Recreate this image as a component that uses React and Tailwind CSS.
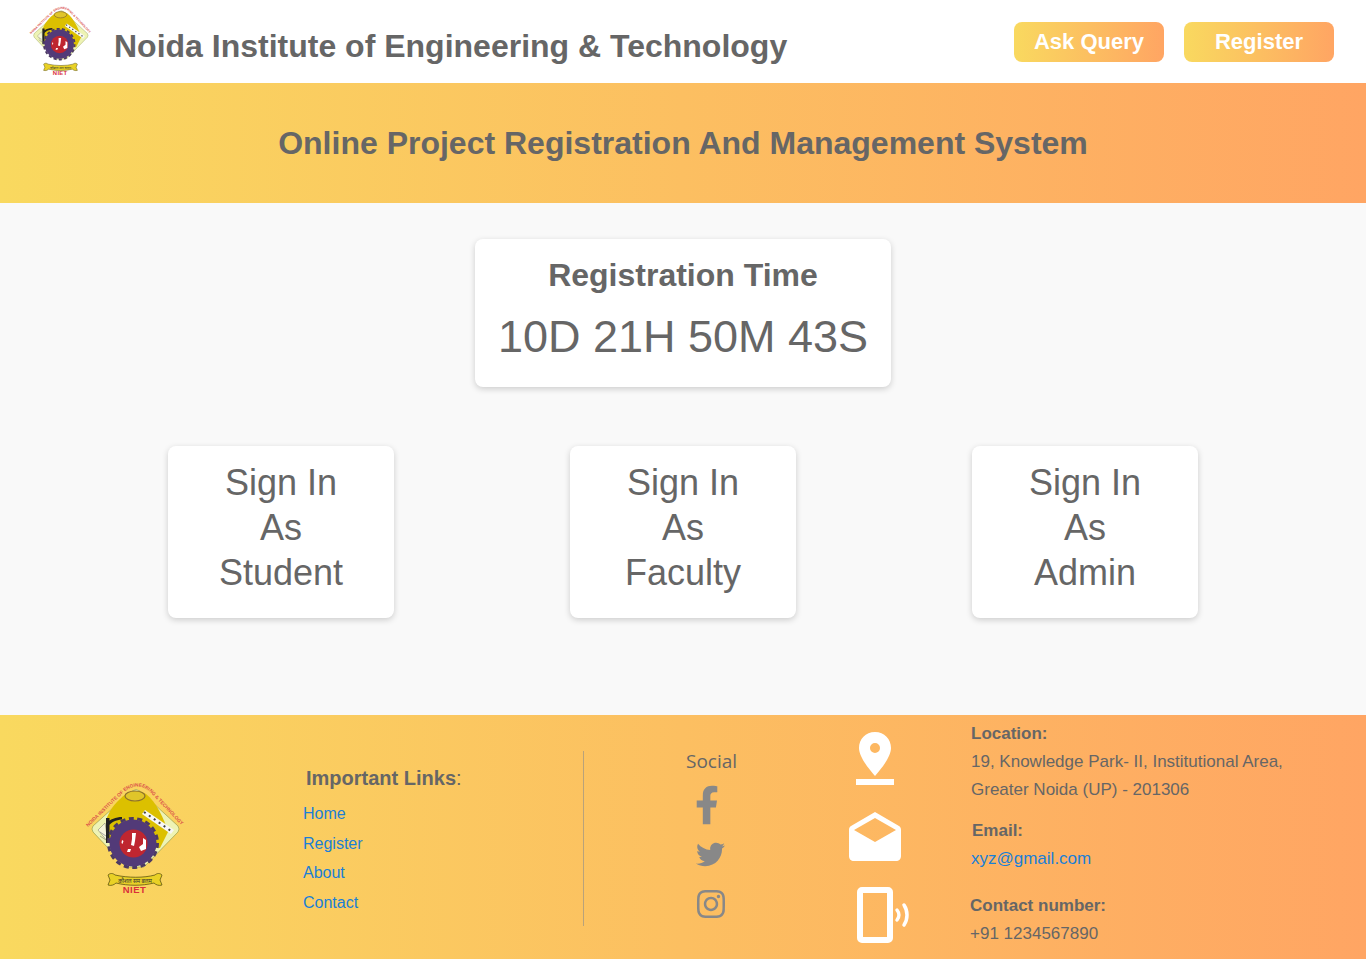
import React from "react";
import { FaFacebookF, FaTwitter, FaInstagram } from "react-icons/fa";

const Logo = ({ className, id }) => (
  <svg viewBox="25 12 100 112" className={className}>
    <defs>
      <path id={id} d="M28 57 L62 24 Q76 10 90 22 L124 58" fill="none" />
    </defs>
    {/* diamond */}
    <path d="M72 21 Q76 18 80 21 L118 56 Q120 59 118 62 L84 97 L66 97 L33 62 Q31 59 33 56 Z" fill="#eef3b4" stroke="#8a9440" strokeWidth="0.6" />
    <path d="M38 60 L45 53 L48 72 Z" fill="#f6f6dc" stroke="#8a8a70" strokeWidth="0.6" />
    {/* dome */}
    <path d="M66 24 C72 20 80 20 86 24 C96 32 104 48 108 62 L100 78 L50 72 L46 50 C50 38 58 30 66 24 Z" fill="#dcc000" />
    <ellipse cx="75" cy="26" rx="10" ry="5" fill="#e0c52a" stroke="#8c6f2e" strokeWidth="1.2" />
    {/* crane */}
    <path d="M46 48 L49.5 48 L49.5 73 L46 73 Z M46 54 C50 49 56 47 62 47 L62 49.5 C56 50 51 52 48 57 Z" fill="#222" />
    <path d="M40 62 L46 66 M40 66 L46 70" stroke="#777" strokeWidth="0.6" />
    {/* solar panel */}
    <path d="M85 40 L114 60 L111 64 L82 44 Z" fill="#f7f7f7" />
    <path d="M84 42 L112.5 62" stroke="#444" strokeWidth="2" strokeDasharray="2 4" />
    {/* gear */}
    <circle cx="73" cy="73" r="24.5" fill="none" stroke="#4c3a62" strokeWidth="3" strokeDasharray="5 3.5" />
    <circle cx="73" cy="73" r="23.5" fill="#523a78" />
    <circle cx="73.5" cy="73.5" r="14" fill="#bf2630" />
    <path d="M72 63 L76 63 L75 71 L74 76 L71 75 L72 69 Z M83 68 L86 70 L86 79 L81 81 L79 77 L83 74 Z M68 79 L71 79 L70 82 L67 82 Z M62 70 L63.5 71 L62.5 74 L61.5 73 Z" fill="#fff" />
    {/* ribbon */}
    <path d="M48 105 C50 103 53 103 55 105 C68 108 84 108 95 105 C97 103 100 103 102 105 L100 110 L102 115 C99 116 96 115 94 113 C82 116 68 116 56 113 C54 115 51 116 48 115 L50 110 Z" fill="#e9d126" stroke="#5e5410" strokeWidth="0.8" />
    <text x="75" y="112.5" textAnchor="middle" fontSize="5.6" fill="#333" fontFamily="'Noto Sans', sans-serif">कौशल सम बलम</text>
    <text x="74.5" y="123" textAnchor="middle" fontSize="9.5" letterSpacing="0.5" fontWeight="700" fill="#d9303a" fontFamily="'Liberation Sans', sans-serif">NIET</text>
    <text fontSize="4.8" fill="#d9504a" fontFamily="'Liberation Sans', sans-serif" fontWeight="700">
      <textPath href={`#${id}`}>NOIDA INSTITUTE OF ENGINEERING &amp; TECHNOLOGY</textPath>
    </text>
  </svg>
);

const PinIcon = () => (
  <svg viewBox="0 0 38 53" className="w-[38px] h-[53px]" fill="#fff">
    <path fillRule="evenodd" d="M19 0 C9.5 0 3 7 3 16 C3 25 13 37 19 44 C25 37 35 25 35 16 C35 7 28.5 0 19 0 Z M19 11 a5 5 0 1 1 0 10 a5 5 0 1 1 0 -10 Z" />
    <rect x="0" y="47" width="38" height="6" />
  </svg>
);

const MailIcon = () => (
  <svg viewBox="0 0 52 49" className="w-[52px] h-[49px]" fill="#fff">
    <path fillRule="evenodd" d="M26 0 L50 14 C51.5 15 52 16 52 18 L52 44 C52 47 50 49 47 49 L5 49 C2 49 0 47 0 44 L0 18 C0 16 .5 15 2 14 Z M26 6 L5 18 L26 30 L47 18 Z" />
  </svg>
);

const PhoneIcon = () => (
  <svg viewBox="0 0 52 56" className="w-[52px] h-[56px]" fill="none" stroke="#fff">
    <rect x="3" y="3" width="30" height="50" rx="2" strokeWidth="6" />
    <path d="M40 23 C42.5 26 42.5 30 40 33" strokeWidth="3.5" strokeLinecap="round" />
    <path d="M47 18 C51 24 51 32 47 38" strokeWidth="3.5" strokeLinecap="round" />
  </svg>
);

const SignInCard = ({ role }) => (
  <div className="w-[226px] h-[172px] bg-white rounded-lg shadow-[0_2px_6px_rgba(0,0,0,0.18)] pt-[15px] text-center text-[36px] leading-[44.8px] text-[#666]">
    Sign In
    <br />
    As
    <br />
    {role}
  </div>
);

const App = () => {
  const gradient = "bg-linear-to-r/srgb from-[#f9d95f] to-[#ffa563]";

  return (
    <div className="w-full h-[959px] overflow-hidden flex flex-col bg-[#f9f9f9] text-[#666] font-['Liberation_Sans',Arial,sans-serif]">
      {/* Header */}
      <header className="h-[83px] bg-white flex items-center pl-[29px] pr-[32px]">
        <Logo id="logo-top" className="w-[63px] h-[70px] shrink-0 -mt-[1px]" />
        <h1 className="ml-[22px] text-[32px] font-bold leading-none mt-[8px]">
          Noida Institute of Engineering &amp; Technology
        </h1>
        <div className="ml-auto flex gap-5">
          <button className={`w-[150px] h-[40px] rounded-lg ${gradient} text-white text-[22px] font-bold`}>
            Ask Query
          </button>
          <button className={`w-[150px] h-[40px] rounded-lg ${gradient} text-white text-[22px] font-bold`}>
            Register
          </button>
        </div>
      </header>

      {/* Banner */}
      <div className={`h-[120px] ${gradient} flex items-center justify-center`}>
        <h2 className="text-[32px] font-bold">Online Project Registration And Management System</h2>
      </div>

      {/* Main */}
      <main className="flex-1 flex flex-col items-center pt-[36px]">
        <div className="w-[416px] h-[148px] bg-white rounded-lg shadow-[0_2px_6px_rgba(0,0,0,0.18)] text-center pt-[17px]">
          <div className="text-[32px] font-bold leading-[38px]">Registration Time</div>
          <div className="text-[45px] leading-[52px] mt-[17px]">10D 21H 50M 43S</div>
        </div>
        <div className="flex gap-[176px] mt-[59px]">
          <SignInCard role="Student" />
          <SignInCard role="Faculty" />
          <SignInCard role="Admin" />
        </div>
      </main>

      {/* Footer */}
      <footer className={`h-[244px] ${gradient} flex`}>
        <div className="w-[303px] pl-[85px] pt-[67px] shrink-0">
          <Logo id="logo-bottom" className="w-[100px] h-[112px]" />
        </div>

        <div className="w-[281px] shrink-0 mt-[36px] h-[175px] border-r border-[#b9a27a] text-[16px]">
          <div className="ml-[3px] mt-[16px] text-[20px] leading-[23px]">
            <b>Important Links</b>:
          </div>
          <ul className="mt-[9px] text-[#1a7fd6] leading-[29.6px]">
            <li>Home</li>
            <li>Register</li>
            <li>About</li>
            <li>Contact</li>
          </ul>
        </div>

        <div className="w-[198px] shrink-0 pl-[102px] pt-[33px]">
          <div className="font-['Open_Sans',sans-serif] text-[19px] leading-[27px]">Social</div>
          <div className="flex flex-col text-[#888] ml-[10px] mt-[10px]">
            <FaFacebookF className="w-[24px] h-[40px] -ml-[1px]" />
            <FaTwitter className="w-[29px] h-[29px] mt-[15px]" />
            <FaInstagram className="w-[32px] h-[32px] mt-[19px] -ml-[1px]" />
          </div>
        </div>

        <div className="w-[189px] shrink-0 flex flex-col items-start pl-[67px] pt-[17px]">
          <div className="ml-[7px]"><PinIcon /></div>
          <div className="mt-[27px]"><MailIcon /></div>
          <div className="mt-[26px] ml-[8px]"><PhoneIcon /></div>
        </div>

        <div className="text-[17px] leading-[28px] pt-[5px]">
          <div className="font-bold">Location:</div>
          <div>19, Knowledge Park- II, Institutional Area,</div>
          <div>Greater Noida (UP) - 201306</div>
          <div className="font-bold mt-[13px] ml-[1px]">Email:</div>
          <div className="text-[#1a7fd6]">xyz@gmail.com</div>
          <div className="font-bold mt-[19px] -ml-[1px]">Contact number:</div>
          <div className="-ml-[1px]">+91 1234567890</div>
        </div>
      </footer>
    </div>
  );
};

export default App;
